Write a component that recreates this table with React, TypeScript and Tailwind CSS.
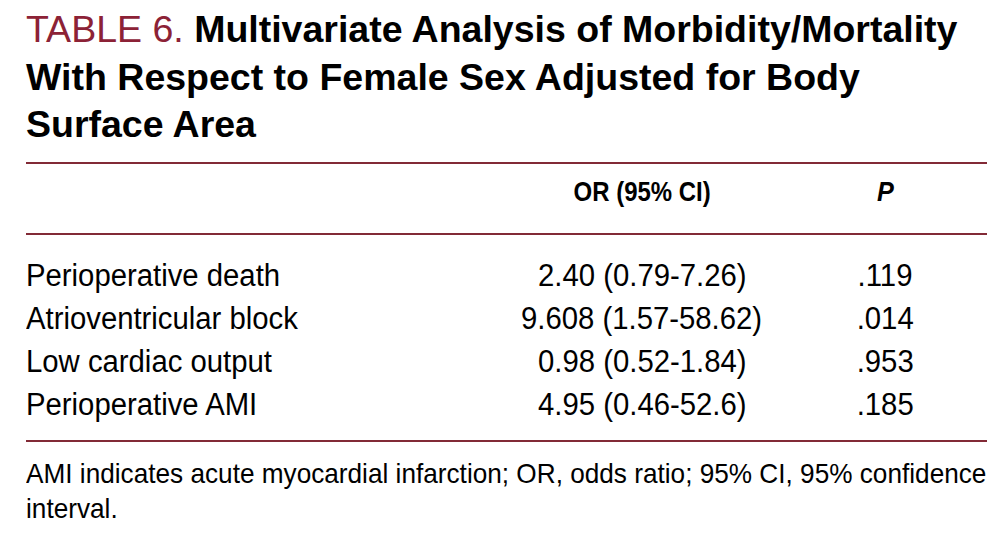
import React from "react";

const sans = { fontFamily: '"Liberation Sans", Arial, sans-serif' };

const rows = [
  ["Perioperative death", "2.40 (0.79-7.26)", ".119"],
  ["Atrioventricular block", "9.608 (1.57-58.62)", ".014"],
  ["Low cardiac output", "0.98 (0.52-1.84)", ".953"],
  ["Perioperative AMI", "4.95 (0.46-52.6)", ".185"],
];

export default function App() {
  return (
    <div className="w-[1008px] h-[550px] bg-white overflow-hidden" style={sans}>
      <div className="ml-[26px] w-[961px] pt-[6px]">
        <h1 className="text-[37.5px] leading-[47.5px] text-black whitespace-nowrap">
          <span className="text-[#8c2236] font-normal">TABLE 6.</span>{" "}
          <span className="font-bold">Multivariate Analysis of Morbidity/Mortality</span>
          <br />
          <span className="font-bold">With Respect to Female Sex Adjusted for Body</span>
          <br />
          <span className="font-bold">Surface Area</span>
        </h1>
        <div className="mt-[13px] h-[2px] bg-[#822a36]" />
        <div className="grid grid-cols-[474px_284px_203px] h-[69px] pt-[13px] text-[28px] leading-[30px] font-bold text-black">
          <div />
          <div className="text-center whitespace-nowrap">
            <span className="inline-block scale-x-[0.855] origin-center">OR (95% CI)</span>
          </div>
          <div className="text-center italic">
            <span className="inline-block scale-x-[0.9] origin-center">P</span>
          </div>
        </div>
        <div className="h-[2px] bg-[#822a36]" />
        <div className="pt-[19px] pb-[14px] text-[31px] leading-[43px] text-black">
          {rows.map((r) => (
            <div key={r[0]} className="grid grid-cols-[474px_284px_203px]">
              <div className="whitespace-nowrap">
                <span className="inline-block scale-x-[0.945] origin-left">{r[0]}</span>
              </div>
              <div className="text-center whitespace-nowrap">
                <span className="inline-block scale-x-[0.945] origin-center">{r[1]}</span>
              </div>
              <div className="text-center">
                <span className="inline-block scale-x-[0.945] origin-center">{r[2]}</span>
              </div>
            </div>
          ))}
        </div>
        <div className="h-[2px] bg-[#822a36]" />
        <div className="pt-[14px] text-[28px] leading-[35px] text-black">
          <div className="w-[961px] overflow-visible whitespace-nowrap">
            <span className="inline-block scale-x-[0.935] origin-left">
              AMI indicates acute myocardial infarction; OR, odds ratio; 95% CI, 95% confidence
            </span>
          </div>
          <div>
            <span className="inline-block scale-x-[0.935] origin-left">interval.</span>
          </div>
        </div>
      </div>
    </div>
  );
}
